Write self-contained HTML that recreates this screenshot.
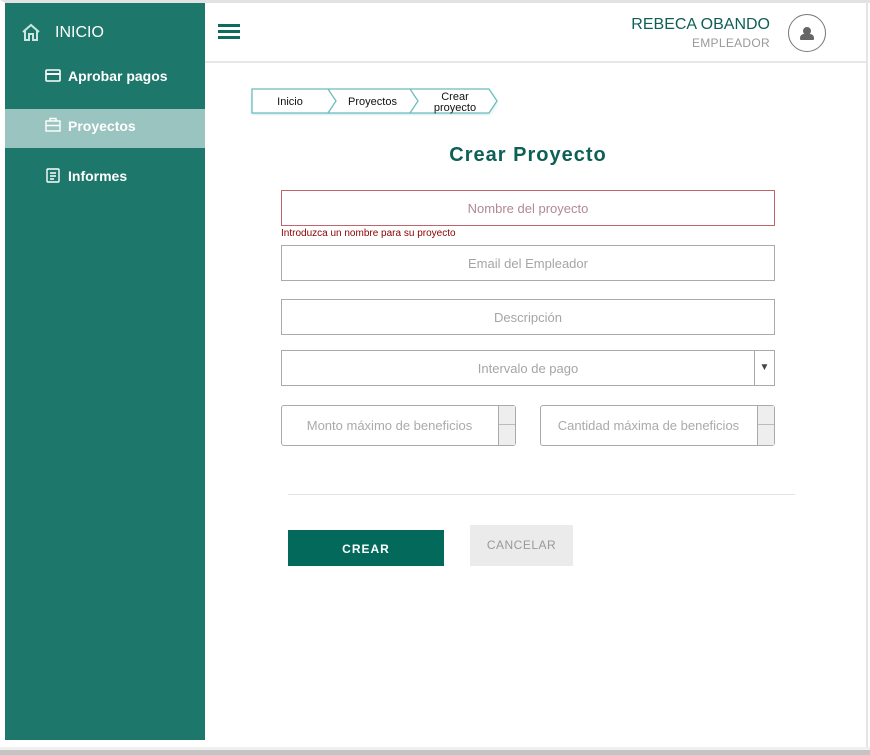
<!DOCTYPE html>
<html><head><meta charset="utf-8"><style>
*{box-sizing:border-box;margin:0;padding:0}
body{width:870px;height:755px;background:#fff;font-family:"Liberation Sans",sans-serif;position:relative;overflow:hidden}
.frame{position:absolute;left:0;top:0;width:870px;height:755px;border-top:3px solid #e2e2e2;border-left:5px solid #fff}
.bottom{position:absolute;left:0;top:750px;width:870px;height:5px;background:#c4c4c4}
.bottom2{position:absolute;left:0;top:747px;width:870px;height:3px;background:#f0f0f0}
.rline{position:absolute;left:866px;top:0;width:2px;height:750px;background:#e4e4e4}
.side{position:absolute;left:5px;top:3px;width:200px;height:737px;background:#1d776b;color:#fff}
.side .item{position:absolute;left:0;width:200px;height:39px;font-weight:bold;font-size:14px;line-height:39px;padding-left:63px}
.side svg{position:absolute}
.top{position:absolute;left:205px;top:3px;width:661px;height:60px;border-bottom:2px solid #e6e6e6}
.abs{position:absolute}
.inp{position:absolute;left:281px;width:494px;height:36px;border:1px solid #aaa;text-align:center;line-height:36px;font-size:13px;color:#a5a5a5}
.crumb{position:absolute;top:89px;height:25px;font-size:11px;color:#111;text-align:center}
</style></head><body>
<div class="frame"></div>
<div class="rline"></div>
<div class="bottom2"></div><div class="bottom"></div>
<div class="side">
 <svg style="left:16px;top:20px" width="20" height="18" viewBox="0 0 20 18" fill="none" stroke="#cde5e0" stroke-width="2"><path d="M2 9 L10 2 L18 9 M4 7 V17 H8 V11 H12 V17 H16 V7"/></svg>
 <div class="abs" style="left:50px;top:20px;font-size:16px;line-height:20px">INICIO</div>
 <div class="item" style="top:54px">Aprobar pagos</div>
 <svg style="left:40px;top:66px" width="16" height="13" viewBox="0 0 16 13" fill="none" stroke="#fff" stroke-width="1.6"><rect x="1" y="1" width="14" height="11" rx="1"/><path d="M1 5 H15" stroke-width="2"/></svg>
 <div class="item" style="top:106px;background:#9ac4bf;line-height:34px">Proyectos</div>
 <svg style="left:40px;top:114px" width="16" height="15" viewBox="0 0 16 15" fill="none" stroke="#fff" stroke-width="1.4"><rect x="1" y="4" width="14" height="10"/><path d="M5 4 V1.5 H11 V4 M1 8.5 H15"/></svg>
 <div class="item" style="top:154px">Informes</div>
 <svg style="left:41px;top:165px" width="14" height="15" viewBox="0 0 14 15" fill="none" stroke="#fff" stroke-width="1.4"><rect x="1" y="1" width="12" height="13" rx="1"/><path d="M4 5 H10 M4 8 H10 M4 11 H8"/></svg>
</div>
<div class="top">
 <div class="abs" style="left:13px;top:21px;width:22px;height:3px;background:#0e6b5d;box-shadow:0 6px 0 #0e6b5d,0 12px 0 #0e6b5d"></div>
 <div class="abs" style="right:96px;top:13px;font-size:16px;color:#0f5f57;text-align:right;white-space:nowrap">REBECA OBANDO</div>
 <div class="abs" style="right:96px;top:33px;font-size:12px;color:#999;letter-spacing:.3px">EMPLEADOR</div>
 <div class="abs" style="left:583px;top:11px;width:38px;height:38px;border:1px solid #777;border-radius:50%"></div>
 <div class="abs" style="left:598px;top:24px;width:8px;height:8px;border-radius:50%;background:#666"></div>
 <div class="abs" style="left:595px;top:31px;width:14px;height:6px;border-radius:4px 4px 1px 1px;background:#666"></div>
</div>
<svg class="abs" style="left:250px;top:88px" width="252" height="30" viewBox="0 0 252 30">
 <defs><filter id="s"><feDropShadow dx="0" dy="2" stdDeviation="2" flood-color="#7bb" flood-opacity=".35"/></filter></defs>
 <path filter="url(#s)" d="M2 1 H239 L247 13 L239 25 H2 Z" fill="#fff"/>
 <path d="M2 1 H78 L86 13 L78 25 H2 Z M78 1 H160 L168 13 L160 25 H78 M160 1 H239 L247 13 L239 25 H160" fill="#fff" stroke="#6bbcbc" stroke-width="1.3"/>
</svg>
<div class="crumb" style="left:252px;width:76px;line-height:27px">Inicio</div>
<div class="crumb" style="left:330px;width:85px;line-height:27px">Proyectos</div>
<div class="crumb" style="left:413px;width:84px;line-height:11px;padding-top:3px">Crear<br>proyecto</div>
<div class="abs" style="left:281px;width:494px;top:144px;text-align:center;font-size:20px;font-weight:bold;color:#0d5f58;letter-spacing:1px">Crear Proyecto</div>
<div class="inp" style="top:190px;border-color:#c0666b;color:#b08a92">Nombre del proyecto</div>
<div class="abs" style="left:281px;top:228px;font-size:10px;color:#8a0000">Introduzca un nombre para su proyecto</div>
<div class="inp" style="top:245px">Email del Empleador</div>
<div class="inp" style="top:299px">Descripción</div>
<div class="inp" style="top:350px">Intervalo de pago
 <div class="abs" style="right:0;top:0;width:20px;height:34px;border-left:1px solid #aaa;font-size:10px;color:#444;line-height:34px">▼</div></div>
<div class="inp" style="top:405px;width:235px;height:41px;line-height:40px;border-radius:3px;padding-right:18px;color:#aaa">Monto máximo de beneficios
 <div class="abs" style="right:0;top:0;width:17px;height:39px;border-left:1px solid #aaa;background:#eee"><div style="height:19px;border-bottom:1px solid #bbb"></div></div></div>
<div class="inp" style="left:540px;top:405px;width:235px;height:41px;line-height:40px;border-radius:3px;padding-right:18px;color:#aaa">Cantidad máxima de beneficios
 <div class="abs" style="right:0;top:0;width:17px;height:39px;border-left:1px solid #aaa;background:#eee"><div style="height:19px;border-bottom:1px solid #bbb"></div></div></div>
<div class="abs" style="left:288px;top:494px;width:507px;height:1px;background:#e4e4e4"></div>
<div class="abs" style="left:288px;top:530px;width:156px;height:36px;background:#03695b;color:#fff;font-weight:bold;font-size:12px;letter-spacing:1px;text-align:center;line-height:38px">CREAR</div>
<div class="abs" style="left:470px;top:525px;width:103px;height:41px;background:#ebebeb;color:#999;font-size:12px;letter-spacing:.5px;text-align:center;line-height:41px">CANCELAR</div>
</body></html>
